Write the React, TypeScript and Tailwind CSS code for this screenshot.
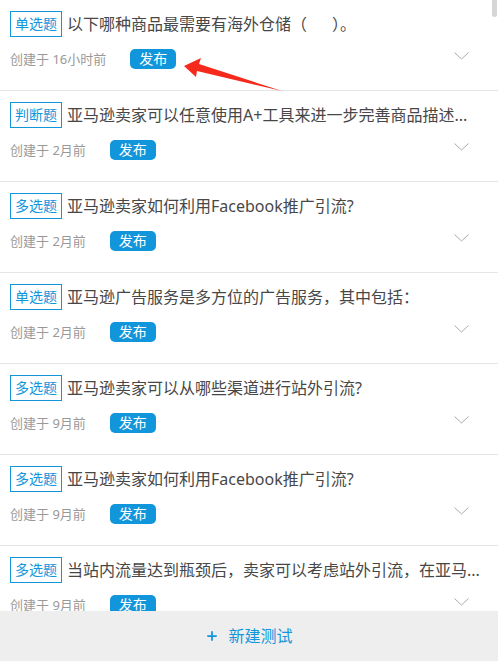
import { Plus } from 'lucide-react'

interface Question {
  kind: string
  title: string
  created: string
}

const questions: Question[] = [
  { kind: '单选题', title: '以下哪种商品最需要有海外仓储（\u00a0\u00a0\u00a0\u00a0\u00a0\u00a0）。', created: '16小时前' },
  { kind: '判断题', title: '亚马逊卖家可以任意使用A+工具来进一步完善商品描述内容。', created: '2月前' },
  { kind: '多选题', title: '亚马逊卖家如何利用Facebook推广引流?', created: '2月前' },
  { kind: '单选题', title: '亚马逊广告服务是多方位的广告服务，其中包括：', created: '2月前' },
  { kind: '多选题', title: '亚马逊卖家可以从哪些渠道进行站外引流?', created: '9月前' },
  { kind: '多选题', title: '亚马逊卖家如何利用Facebook推广引流?', created: '9月前' },
  { kind: '多选题', title: '当站内流量达到瓶颈后，卖家可以考虑站外引流，在亚马逊以外的平台推广', created: '9月前' },
]

// titles are cut to 25 characters, like the list does
const clip = (s: string) => (Array.from(s).length > 25 ? Array.from(s).slice(0, 25).join('') + '...' : s)

function QuestionRow({ q }: { q: Question }) {
  return (
    <div className="h-[91px] shrink-0 border-b border-[#e5e5e5] pl-[10px] pr-[14px] pt-[11px]">
      {/* Title line */}
      <div className="flex items-center h-[26px]">
        <span className="shrink-0 h-[26px] w-[52px] border border-[#1296db] text-[#1296db] text-[14px] leading-[24px] text-center">
          {q.kind}
        </span>
        <span className="ml-[5px] whitespace-nowrap text-[16px] leading-[26px] text-[#474747]">{clip(q.title)}</span>
      </div>

      {/* Meta line */}
      <div className="flex items-center mt-[12px] h-[20px]">
        <span className="text-[13px] text-[#999] leading-[20px]">创建于 {q.created}</span>
        <span className="ml-[24px] h-[20px] w-[46px] rounded-[5px] bg-[#1296db] text-white text-[14px] leading-[20px] text-center">
          发布
        </span>
        <svg className="ml-auto mr-[15px] -mt-[7px]" width="15" height="8" viewBox="0 0 15 8" fill="none">
          <path d="M0.5 0.5 L7.5 7 L14.5 0.5" stroke="#aaa" strokeWidth="1" />
        </svg>
      </div>
    </div>
  )
}

export default function App() {
  return (
    <div
      className="relative w-[498px] h-[661px] flex flex-col bg-white overflow-hidden"
      style={{ fontFamily: '"Noto Sans", "Noto Sans CJK SC", sans-serif' }}
    >
      <div className="flex-1 overflow-hidden flex flex-col">
        {questions.map((q, i) => (
          <QuestionRow key={i} q={q} />
        ))}
      </div>

      <div className="h-[50px] shrink-0 bg-[#eeeeee] flex items-center justify-center text-[#1296db]">
        <Plus className="w-[14px] h-[14px]" strokeWidth={3} />
        <span className="ml-[9px] text-[16px] leading-[20px]">新建测试</span>
      </div>

      {/* scrollbar thumb */}
      <div className="absolute top-0 right-[1px] w-[5px] h-[17px] rounded-b-[3px] bg-[#d6d6d6]" />

      {/* red annotation arrow */}
      <svg className="absolute left-0 top-0 pointer-events-none" width="498" height="120" viewBox="0 0 498 120">
        <polygon points="184,66 201,58 199,64 282,91 197,71 196,77" fill="#f52a1c" />
      </svg>
    </div>
  )
}
